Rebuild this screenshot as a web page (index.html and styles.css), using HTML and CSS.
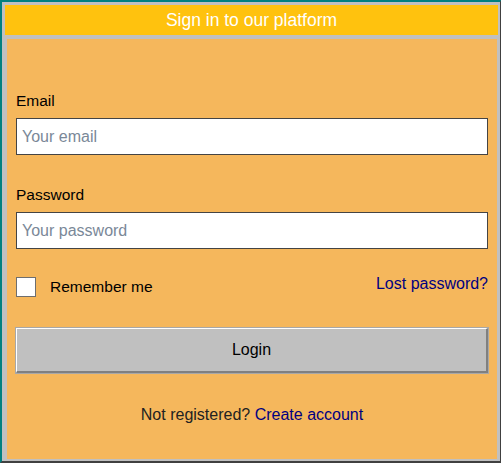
FILE: index.html
```html
<!DOCTYPE html>
<html lang="en">
<head>
<meta charset="utf-8">
<title>Sign in</title>
<link rel="stylesheet" href="styles.css">
</head>
<body>
<div class="window">
  <div class="title">Sign in to our platform</div>
  <form class="panel" onsubmit="return false">
    <label class="label" for="email">Email</label>
    <input class="field" id="email" type="email" placeholder="Your email">
    <label class="label label-pass" for="pass">Password</label>
    <input class="field" id="pass" type="password" placeholder="Your password">
    <div class="row">
      <label class="remember"><span class="box"></span><span class="remember-text">Remember me</span></label>
      <a class="link lost" href="#">Lost password?</a>
    </div>
    <button class="login" type="button">Login</button>
    <p class="register">Not registered? <a class="link" href="#">Create account</a></p>
  </form>
</div>
</body>
</html>
```
FILE: styles.css
```css
html, body {
  margin: 0;
  padding: 0;
  background: #c0c0c0;
}
body {
  font-family: "Liberation Sans", Arial, sans-serif;
  font-size: 16px;
  color: #000;
}
.window {
  box-sizing: border-box;
  width: 501px;
  height: 463px;
  border-style: solid;
  border-width: 2px 1px 2px 2px;
  border-top-color: #008080;
  border-left-color: #008080;
  border-right-color: #404040;
  border-bottom-color: #404040;
  padding: 3px 2px 2px 3px;
  background: #c0c0c0;
  display: flex;
  flex-direction: column;
  gap: 4px;
}
.title {
  height: 30px;
  flex: none;
  background: #ffc20e;
  color: #fff;
  font-size: 17.5px;
  line-height: 30px;
  text-align: center;
}
.panel {
  flex: 1;
  margin: 0 1px 0 2px;
  background: #f5b75c;
  padding: 53px 9px 0 9px;
  display: flex;
  flex-direction: column;
}
.label {
  display: block;
  font-size: 15.5px;
  line-height: 18px;
  height: 18px;
  margin-bottom: 8px;
}
.label-pass {
  margin-top: 31px;
}
.field {
  box-sizing: border-box;
  display: block;
  width: 100%;
  height: 37px;
  margin: 0;
  border: 1px solid #444;
  background: #fff;
  padding: 0 5px;
  font-family: "Liberation Sans", Arial, sans-serif;
  font-size: 16px;
  outline: none;
}
.field::placeholder {
  color: #7a8898;
}
.row {
  display: flex;
  justify-content: space-between;
  align-items: flex-start;
  margin-top: 28px;
  height: 20px;
}
.remember {
  display: flex;
  align-items: flex-start;
}
.box {
  box-sizing: border-box;
  width: 20px;
  height: 20px;
  background: #fff;
  border: 1px solid #6e6e6e;
}
.remember-text {
  margin-left: 14px;
  margin-top: 1px;
  font-size: 15.5px;
  line-height: 18px;
}
.link {
  color: #000080;
  text-decoration: none;
}
.lost {
  line-height: 18px;
  margin-top: -2px;
}
.login {
  box-sizing: border-box;
  display: block;
  width: 100%;
  height: 45px;
  margin: 31px 0 0 0;
  padding: 0;
  background: #c0c0c0;
  border-style: solid;
  border-width: 1px 2px 2px 1px;
  border-color: #fff #808080 #808080 #fff;
  box-shadow: 0 0 0 1px #a8a8a8;
  font-family: "Liberation Sans", Arial, sans-serif;
  font-size: 16px;
  color: #000;
}
.register {
  margin: 33px 0 0 0;
  text-align: center;
  line-height: 18px;
  color: #222;
}
```
